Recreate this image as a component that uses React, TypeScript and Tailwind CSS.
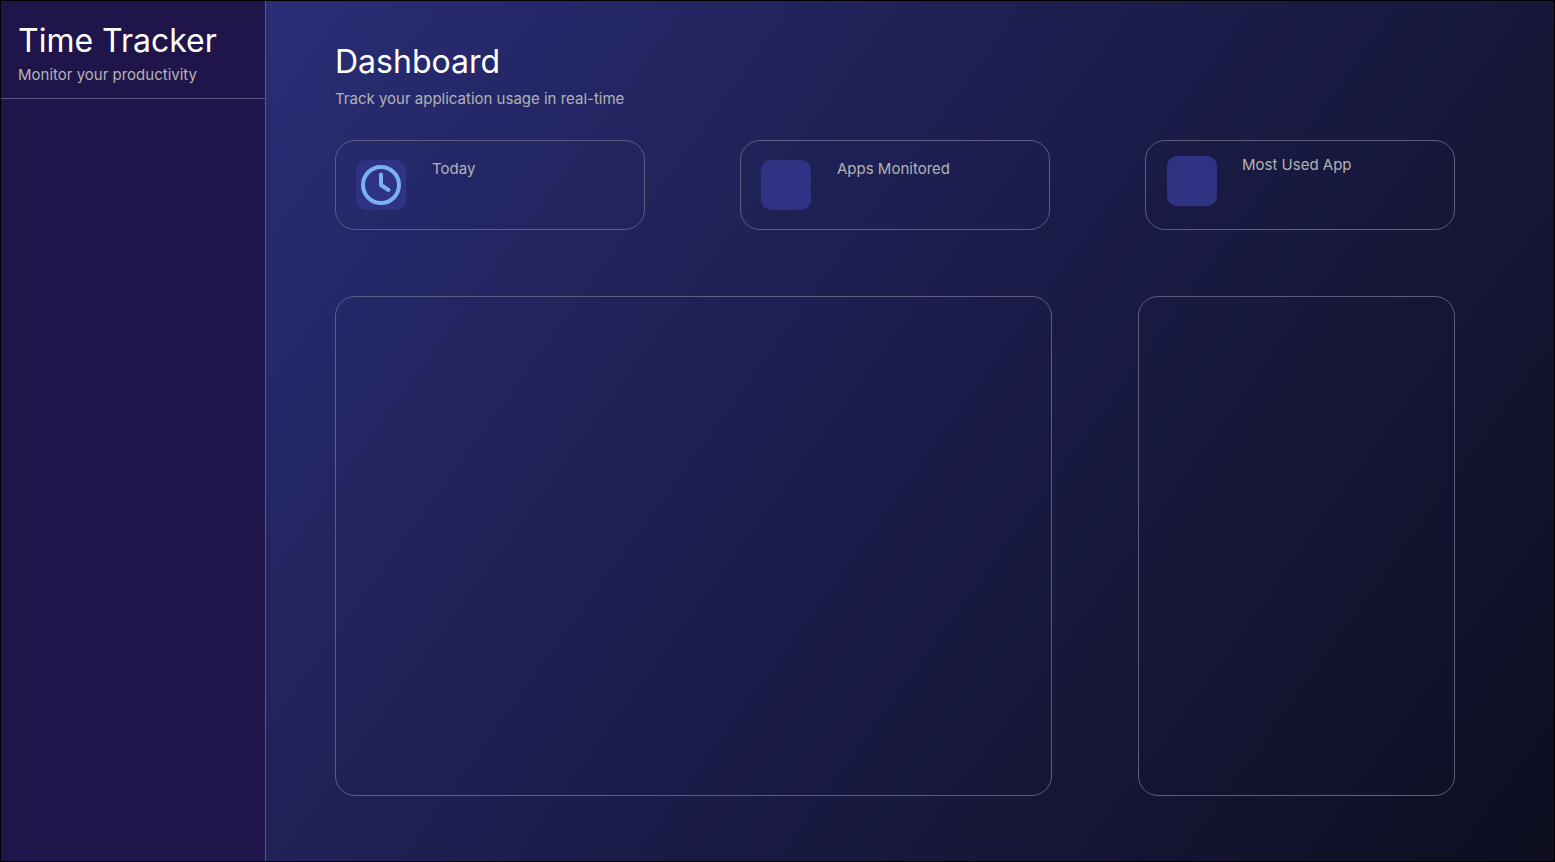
import type { ReactNode } from "react";

type StatCardProps = {
  label: string;
  icon?: ReactNode;
  raised?: boolean;
};

function ClockIcon() {
  return (
    <svg viewBox="0 0 50 50" className="size-full" fill="none" aria-hidden="true">
      <circle cx="25" cy="25" r="18" stroke="#7bb1ed" strokeWidth="4" />
      <path d="M25 14.5V25l7.5 5" stroke="#7bb1ed" strokeWidth="4" strokeLinecap="round" strokeLinejoin="round" />
    </svg>
  );
}

function StatCard({ label, icon, raised = false }: StatCardProps) {
  return (
    <article
      className={`flex h-[90px] items-start rounded-[20px] border border-[#5d5d80] ${
        raised ? "gap-[25px] px-[21px] pt-[15px]" : "gap-[26px] px-5 pt-[19px]"
      }`}
    >
      <div className="size-[50px] shrink-0 rounded-[10px] bg-[#2f3384]">{icon}</div>
      <h2 className="text-[15px] leading-[18px] font-normal text-[#b3b3b3]">{label}</h2>
    </article>
  );
}

export default function App() {
  return (
    <div className="flex min-h-screen border border-black bg-[#20154a] font-['Inter',sans-serif]">
      <aside className="w-[265px] shrink-0 border-r border-[#5d5880]">
        <header className="border-b border-[#5d5880] pt-5 pr-4 pb-[13px] pl-[17px]">
          <p className="text-[32px] leading-[40px] font-normal text-white">Time Tracker</p>
          <p className="mt-1 text-[15px] leading-[20px] font-normal text-[#b3b3b3]">Monitor your productivity</p>
        </header>
      </aside>

      <main className="min-w-0 flex-1 bg-[linear-gradient(126deg,#292d76_0%,#1b1c48_50%,#0e0e20_100%)] pt-[41px] pr-[99px] pb-16 pl-[69px]">
        <header>
          <h1 className="text-[32px] leading-[40px] font-normal text-white">Dashboard</h1>
          <p className="mt-[7px] text-[15px] leading-[20px] font-normal text-[#b3b3b3]">
            Track your application usage in real-time
          </p>
        </header>

        <section className="mt-[31px] grid grid-cols-3 gap-[95px]" aria-label="Summary">
          <StatCard label="Today" icon={<ClockIcon />} />
          <StatCard label="Apps Monitored" />
          <StatCard label="Most Used App" raised />
        </section>

        <div className="mt-[66px] flex gap-[86px]">
          <section className="h-[500px] flex-1 rounded-[20px] border border-[#5d5d80]" aria-label="Usage chart" />
          <section className="h-[500px] w-[317px] rounded-[20px] border border-[#5d5d80]" aria-label="Applications" />
        </div>
      </main>
    </div>
  );
}
